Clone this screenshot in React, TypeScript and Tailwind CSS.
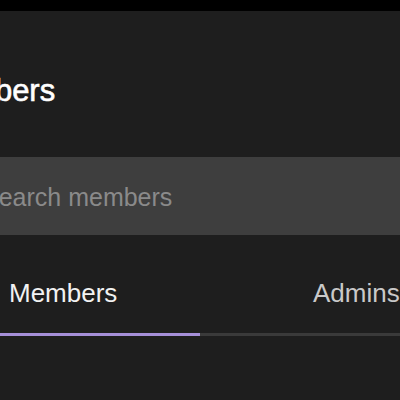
import React from "react";

export default function App() {
  return (
    <div
      className="w-[400px] h-[400px] overflow-hidden bg-[#1e1e1e]"
      style={{ fontFamily: "'Liberation Sans', Arial, sans-serif" }}
    >
      <div className="h-[11px] bg-black" />
      <div className="pt-[64px]">
        <h1 className="ml-[-74px] text-[31px] leading-[31px] font-normal text-white whitespace-nowrap [-webkit-text-stroke:0.6px_white]">
          Members
        </h1>
      </div>
      <div className="mt-[51px] h-[78px] bg-[#3e3e3e] pt-[28px]">
        <div className="ml-[-18px] text-[25px] leading-[25px] text-[#8a8a8a] whitespace-nowrap">
          Search members
        </div>
      </div>
      <div className="grid grid-cols-2">
        <div className="flex flex-col pt-[45px]">
          <span className="pl-[9px] text-[26px] leading-[26px] text-[#f2f2f2] whitespace-nowrap">
            Members
          </span>
          <div className="mt-[27px] h-[3px] bg-[#a58fd8]" />
        </div>
        <div className="flex flex-col pt-[45px]">
          <span className="pl-[113px] text-[26px] leading-[26px] text-[#c9c9c9] whitespace-nowrap">
            Admins
          </span>
          <div className="mt-[27px] h-[3px] bg-[#3a3a3a]" />
        </div>
      </div>
    </div>
  );
}
